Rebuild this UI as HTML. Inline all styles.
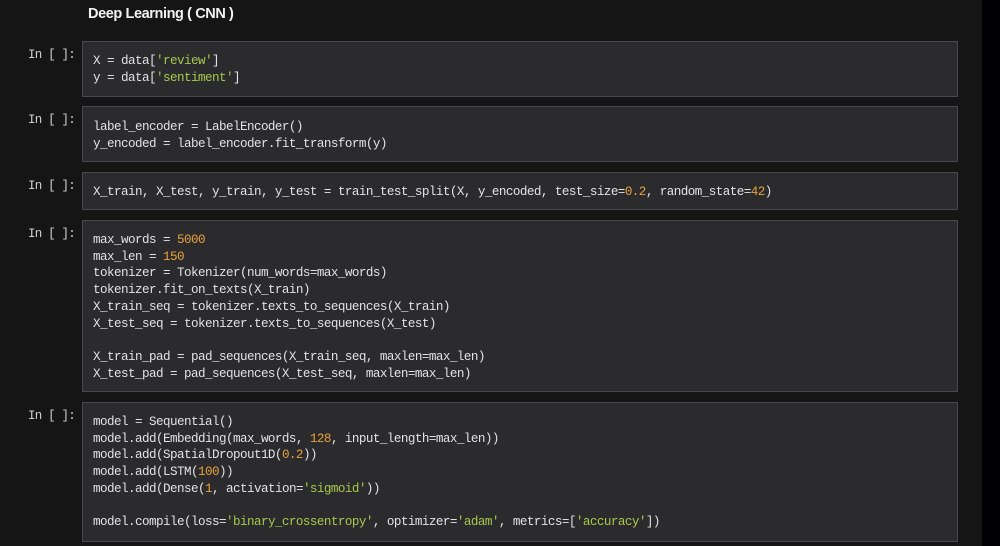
<!DOCTYPE html>
<html><head><style>
html,body{margin:0;padding:0;width:1000px;height:546px;overflow:hidden;background:#000004;}
.nb{position:absolute;left:0;top:0;width:982px;height:546px;background:#151515;}
.h{position:absolute;left:88px;top:6px;font:bold 14.5px "Liberation Sans",sans-serif;color:#f2f2f2;letter-spacing:-0.4px;}
.p{position:absolute;left:28px;font:12.5px "Liberation Mono",monospace;color:#cfcfcf;letter-spacing:-0.8px;}
.c{position:absolute;left:82px;width:876px;background:#2b2a2d;border:1px solid #48474b;box-sizing:border-box;}
pre{margin:0;padding:11px 0 0 10px;font:12.6px/16.7px "Liberation Mono",monospace;color:#e2e2e2;letter-spacing:-0.56px;}
.s{color:#a8c84c}.n{color:#e8a23c}
</style></head><body>
<div class="nb">
<div class="h">Deep Learning ( CNN )</div>

<div class="p" style="top:48px">In [ ]:</div>
<div class="c" style="top:41px;height:56px"><pre>X = data[<span class="s">'review'</span>]
y = data[<span class="s">'sentiment'</span>]</pre></div>

<div class="p" style="top:113px">In [ ]:</div>
<div class="c" style="top:106px;height:56px"><pre style="padding-top:12px">label_encoder = LabelEncoder()
y_encoded = label_encoder.fit_transform(y)</pre></div>

<div class="p" style="top:179px">In [ ]:</div>
<div class="c" style="top:172px;height:38px"><pre>X_train, X_test, y_train, y_test = train_test_split(X, y_encoded, test_size=<span class="n">0.2</span>, random_state=<span class="n">42</span>)</pre></div>

<div class="p" style="top:227px">In [ ]:</div>
<div class="c" style="top:220px;height:172px"><pre>max_words = <span class="n">5000</span>
max_len = <span class="n">150</span>
tokenizer = Tokenizer(num_words=max_words)
tokenizer.fit_on_texts(X_train)
X_train_seq = tokenizer.texts_to_sequences(X_train)
X_test_seq = tokenizer.texts_to_sequences(X_test)

X_train_pad = pad_sequences(X_train_seq, maxlen=max_len)
X_test_pad = pad_sequences(X_test_seq, maxlen=max_len)</pre></div>

<div class="p" style="top:409px">In [ ]:</div>
<div class="c" style="top:402px;height:140px"><pre>model = Sequential()
model.add(Embedding(max_words, <span class="n">128</span>, input_length=max_len))
model.add(SpatialDropout1D(<span class="n">0.2</span>))
model.add(LSTM(<span class="n">100</span>))
model.add(Dense(<span class="n">1</span>, activation=<span class="s">'sigmoid'</span>))

model.compile(loss=<span class="s">'binary_crossentropy'</span>, optimizer=<span class="s">'adam'</span>, metrics=[<span class="s">'accuracy'</span>])</pre></div>
</div>
</body></html>
